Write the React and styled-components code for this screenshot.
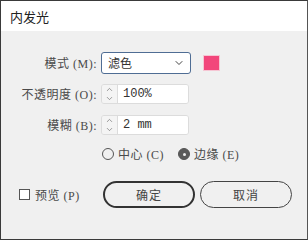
import styled, { createGlobalStyle } from "styled-components";
import { ChevronDown, ChevronUp } from "lucide-react";

const GlobalStyle = createGlobalStyle`
  html, body {
    margin: 0;
    padding: 0;
    background: #f0f0f0;
  }
  * {
    box-sizing: border-box;
  }
`;

const font = `"Liberation Serif", "Noto Sans CJK SC", serif`;

const Dialog = styled.div`
  width: 308px;
  height: 240px;
  border: 1px solid #3a3a3a;
  border-right-color: #555;
  background: #f0f0f0;
  display: flex;
  flex-direction: column;
  font-family: ${font};
  color: #4a4a4a;
  font-size: 12px;
`;

const TitleBar = styled.div`
  height: 30px;
  background: #fff;
  display: flex;
  align-items: center;
  padding-left: 9px;
  font-family: "Noto Sans CJK SC", sans-serif;
  font-size: 13px;
  color: #222;
`;

const Body = styled.div`
  padding-top: 21px;
  display: flex;
  flex-direction: column;
`;

const Row = styled.div`
  display: grid;
  grid-template-columns: 96px auto;
  column-gap: 4px;
  align-items: center;
  height: ${(p) => p.h}px;
  margin-bottom: ${(p) => p.mb}px;
`;

const Label = styled.div`
  text-align: right;
  white-space: nowrap;
  letter-spacing: 0.5px;
`;

const Controls = styled.div`
  display: flex;
  align-items: center;
  gap: 12px;
`;

const Select = styled.div`
  width: 90px;
  height: 22px;
  border: 1px solid #4f6d94;
  border-radius: 3px;
  background: #fff;
  display: flex;
  align-items: center;
  justify-content: space-between;
  padding: 0 5px 0 6px;
  color: #333;
`;

const Swatch = styled.div`
  width: 17px;
  height: 16px;
  border: 1px solid #f6c6d4;
  background: #f2467b;
`;

const NumberField = styled.div`
  width: 88px;
  height: 20px;
  display: flex;
  border: 1px solid #dcdcdc;
  border-radius: 3px;
  overflow: hidden;
`;

const Spinner = styled.div`
  width: 16px;
  display: flex;
  flex-direction: column;
  align-items: center;
  justify-content: center;
  background: #f4f4f4;
  border-right: 1px solid #dcdcdc;
  color: #555;
  line-height: 0;
`;

const Value = styled.div`
  flex: 1;
  background: #fff;
  display: flex;
  align-items: center;
  padding-left: 5px;
  font-family: "Liberation Mono", "Noto Sans CJK SC", monospace;
  font-size: 12px;
  color: #333;
`;

const RadioRow = styled.div`
  display: flex;
  align-items: center;
  height: 16px;
  padding-left: 101px;
  margin-bottom: 19px;
  gap: 14px;
`;

const RadioOption = styled.label`
  display: flex;
  align-items: center;
  gap: 4px;
  letter-spacing: 0.5px;
`;

const RadioDot = styled.span`
  width: 12px;
  height: 12px;
  border-radius: 50%;
  border: 1.5px solid #555;
  background: ${(p) => (p.checked ? "#5a5a5a" : "transparent")};
  display: flex;
  align-items: center;
  justify-content: center;
  &::after {
    content: "";
    width: 3px;
    height: 3px;
    border-radius: 50%;
    background: ${(p) => (p.checked ? "#eee" : "transparent")};
  }
`;

const Footer = styled.div`
  display: flex;
  align-items: center;
  height: 27px;
  padding-left: 18px;
`;

const Check = styled.label`
  width: 84px;
  display: flex;
  align-items: center;
  gap: 5px;
  letter-spacing: 0.5px;
`;

const Box = styled.span`
  width: 11px;
  height: 11px;
  border: 1px solid #555;
  background: #fff;
`;

const Button = styled.button`
  width: 92px;
  height: 27px;
  margin-right: 5px;
  border-radius: 14px;
  border: ${(p) => (p.$primary ? "2px solid #333" : "1px solid #444")};
  background: #f0f0f0;
  font-family: ${font};
  font-size: 12px;
  color: #444;
  letter-spacing: 1px;
`;

export default function App() {
  return (
    <>
      <GlobalStyle />
      <Dialog>
        <TitleBar>内发光</TitleBar>
        <Body>
          <Row h={22} mb={10}>
            <Label>模式 (M):</Label>
            <Controls>
              <Select>
                <span>滤色</span>
                <ChevronDown size={12} strokeWidth={2} color="#444" />
              </Select>
              <Swatch />
            </Controls>
          </Row>
          <Row h={20} mb={11}>
            <Label>不透明度 (O):</Label>
            <NumberField>
              <Spinner>
                <ChevronUp size={9} strokeWidth={1.5} />
                <ChevronDown size={9} strokeWidth={1.5} />
              </Spinner>
              <Value>100%</Value>
            </NumberField>
          </Row>
          <Row h={20} mb={11}>
            <Label>模糊 (B):</Label>
            <NumberField>
              <Spinner>
                <ChevronUp size={9} strokeWidth={1.5} />
                <ChevronDown size={9} strokeWidth={1.5} />
              </Spinner>
              <Value>2 mm</Value>
            </NumberField>
          </Row>
          <RadioRow>
            <RadioOption>
              <RadioDot />
              中心 (C)
            </RadioOption>
            <RadioOption>
              <RadioDot checked />
              边缘 (E)
            </RadioOption>
          </RadioRow>
          <Footer>
            <Check>
              <Box />
              预览 (P)
            </Check>
            <Button $primary>确定</Button>
            <Button>取消</Button>
          </Footer>
        </Body>
      </Dialog>
    </>
  );
}
